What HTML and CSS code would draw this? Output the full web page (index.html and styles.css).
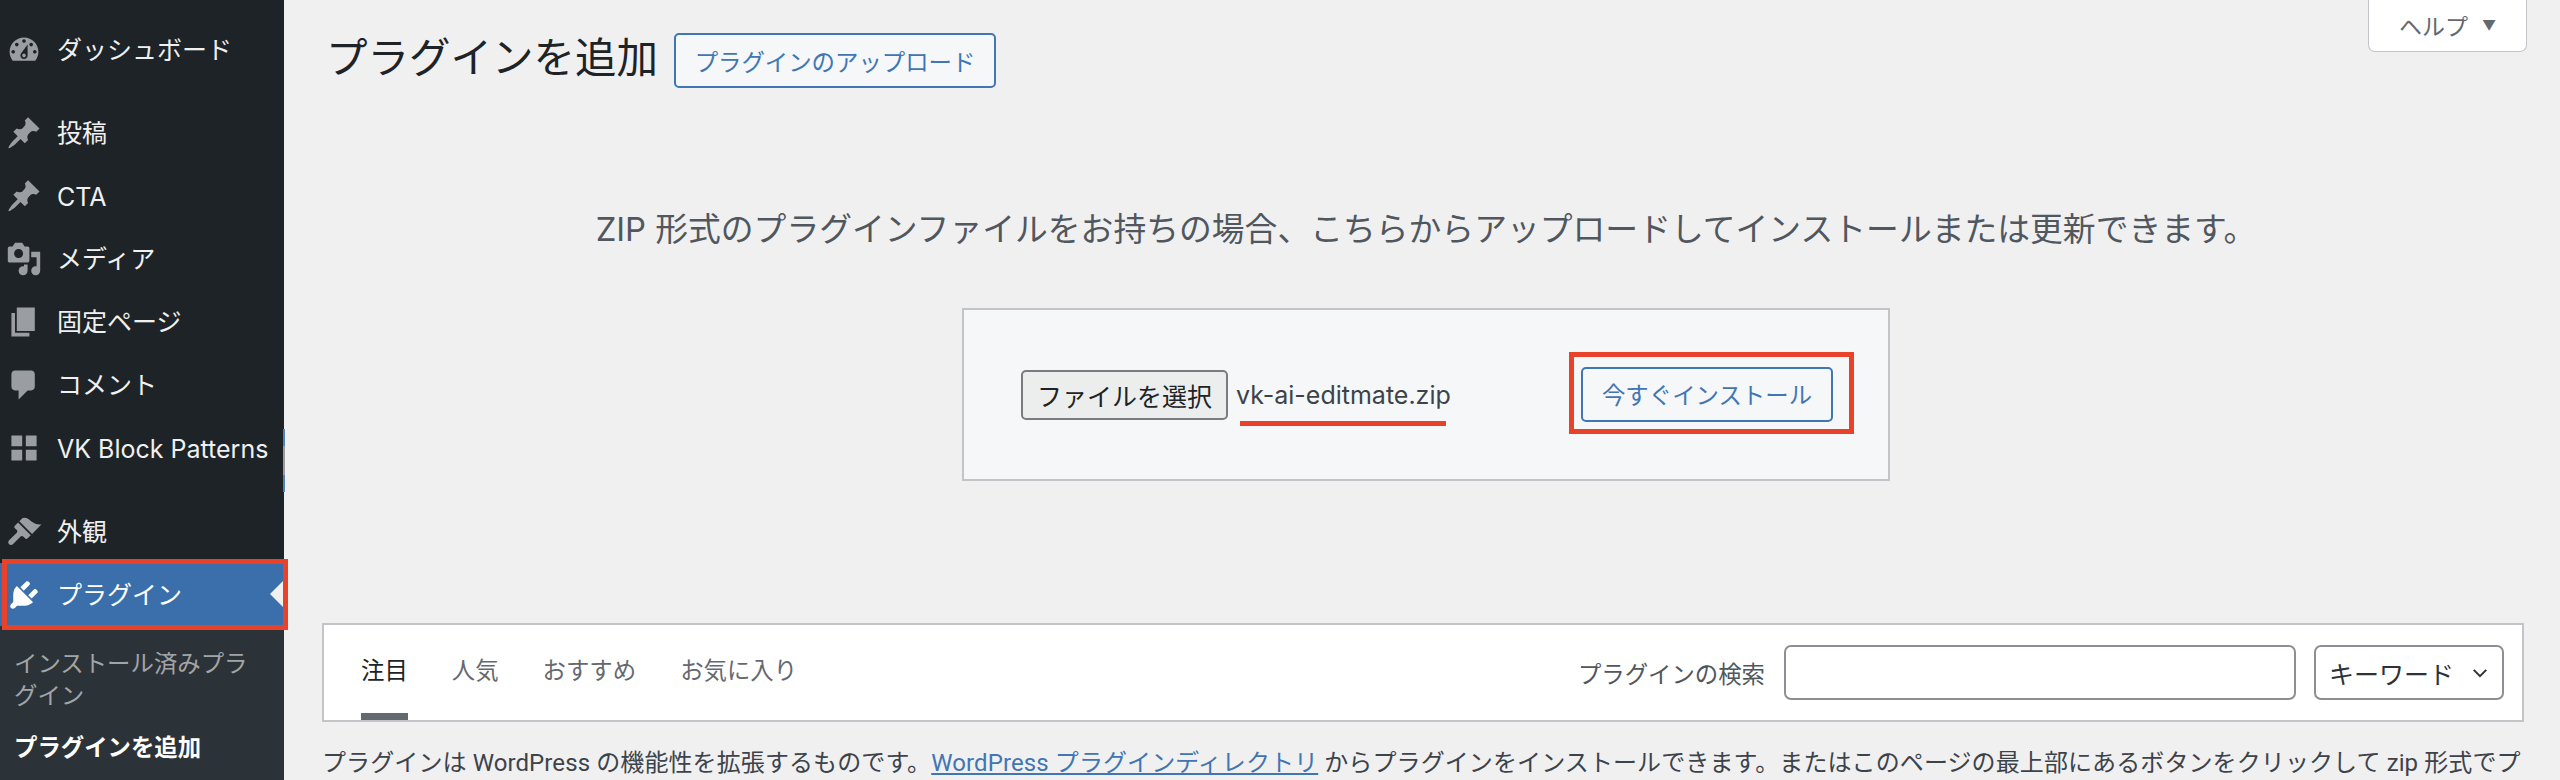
FILE: index.html
```html
<!DOCTYPE html>
<html lang="ja">
<head>
<meta charset="utf-8">
<title>プラグインを追加</title>
<link rel="stylesheet" href="styles.css">
</head>
<body>
<div class="layout">
  <nav class="sidebar">
    <ul class="menu">
      <li class="item"><svg class="ico" viewBox="0 0 20 20"><path fill-rule="evenodd" d="M3.76 16h12.48c1.1-1.37 1.76-3.11 1.76-5 0-4.42-3.58-8-8-8s-8 3.58-8 8c0 1.89.66 3.63 1.76 5zM10 4c.55 0 1 .45 1 1s-.45 1-1 1-1-.45-1-1 .45-1 1-1zM6 6c.55 0 1 .45 1 1s-.45 1-1 1-1-.45-1-1 .45-1 1-1zm8 0c.55 0 1 .45 1 1s-.45 1-1 1-1-.45-1-1 .45-1 1-1zm-5.37 5.55L12 7v6c0 1.1-.9 2-2 2s-2-.9-2-2c0-.57.24-1.08.63-1.45zM4 10c.55 0 1 .45 1 1s-.45 1-1 1-1-.45-1-1 .45-1 1-1zm12 0c.55 0 1 .45 1 1s-.45 1-1 1-1-.45-1-1 .45-1 1-1zm-5 3c0-.55-.45-1-1-1s-1 .45-1 1 .45 1 1 1 1-.45 1-1z"/></svg><span>ダッシュボード</span></li>
      <li class="item sep"><svg class="ico" viewBox="0 0 20 20"><path d="M10.44 3.02l1.82-1.82 6.36 6.35-1.83 1.82c-1.05-.68-2.48-.57-3.41.36l-.75.75c-.92.93-1.04 2.35-.35 3.41l-1.83 1.82-2.41-2.41-2.8 2.79c-.42.42-3.38 2.71-3.8 2.29s1.86-3.39 2.28-3.81l2.79-2.79L4.1 9.36l1.83-1.82c1.05.69 2.48.57 3.4-.36l.75-.75c.93-.92 1.05-2.35.36-3.41z"/></svg><span>投稿</span></li>
      <li class="item"><svg class="ico" viewBox="0 0 20 20"><path d="M10.44 3.02l1.82-1.82 6.36 6.35-1.83 1.82c-1.05-.68-2.48-.57-3.41.36l-.75.75c-.92.93-1.04 2.35-.35 3.41l-1.83 1.82-2.41-2.41-2.8 2.79c-.42.42-3.38 2.71-3.8 2.29s1.86-3.39 2.28-3.81l2.79-2.79L4.1 9.36l1.83-1.82c1.05.69 2.48.57 3.4-.36l.75-.75c.93-.92 1.05-2.35.36-3.41z"/></svg><span class="latin">CTA</span></li>
      <li class="item"><svg class="ico" viewBox="0 0 20 20"><path fill-rule="evenodd" d="M13 11V4c0-.55-.45-1-1-1h-1.67L9 1H5L3.67 3H2c-.55 0-1 .45-1 1v7c0 .55.45 1 1 1h10c.55 0 1-.45 1-1zM7 4.5c1.38 0 2.5 1.12 2.5 2.5S8.38 9.5 7 9.5 4.5 8.38 4.5 7 5.62 4.5 7 4.5zM14 6h5v10.5c0 1.38-1.12 2.5-2.5 2.5S14 17.88 14 16.5s1.12-2.5 2.5-2.5c.17 0 .34.02.5.05V9h-3V6zm-4 8.05V13h2v3.5c0 1.38-1.12 2.5-2.5 2.5S7 17.88 7 16.5 8.12 14 9.5 14c.17 0 .34.02.5.05z"/></svg><span>メディア</span></li>
      <li class="item"><svg class="ico" viewBox="0 0 20 20"><path d="M6 15V2h10v13H6zm-1 1h8v2H3V5h2v11z"/></svg><span>固定ページ</span></li>
      <li class="item"><svg class="ico" viewBox="0 0 20 20"><path d="M5 2h9c1.1 0 2 .9 2 2v7c0 1.1-.9 2-2 2h-2l-5 5v-5H5c-1.1 0-2-.9-2-2V4c0-1.1.9-2 2-2z"/></svg><span>コメント</span></li>
      <li class="item"><svg class="ico" viewBox="0 0 20 20"><path d="M9 9V3H3v6h6zm8 0V3h-6v6h6zm-8 8v-6H3v6h6zm8 0v-6h-6v6h6z"/></svg><span class="latin">VK Block Patterns</span></li>
      <li class="item sep2"><svg class="ico" viewBox="0 0 20 20"><path d="M14.48 11.06L7.41 3.99l1.5-1.5c.5-.56 2.3-.47 3.51.32 1.21.8 1.43 1.28 2.91 2.1 1.18.64 2.45 1.26 4.45.85zM13.77 11.77L6.7 4.7 4.93 6.47c-.39.39-.39 1.02 0 1.41l1.06 1.06c.39.39.39 1.03 0 1.42L1.7 14.65c-.59.59-.59 1.53 0 2.12.59.59 1.53.59 2.12 0l4.29-4.29c.39-.39 1.03-.39 1.42 0l1.06 1.06c.39.39 1.02.39 1.41 0z"/></svg><span>外観</span></li>
      <li class="item active"><svg class="ico" viewBox="0 0 20 20"><path d="M13.11 4.36L9.87 7.6 8 5.73l3.24-3.24c.35-.34 1.05-.2 1.56.32.52.51.66 1.21.31 1.55zm-8 1.77l.91-1.12 9.01 9.01-1.19.84c-.71.71-2.63 1.16-3.82 1.16H6.14L4.9 17.26c-.59.59-1.54.59-2.12 0-.59-.58-.59-1.53 0-2.12l1.24-1.24v-3.88c0-1.13.4-3.19 1.09-3.89zm7.26 3.97l3.24-3.24c.34-.35 1.04-.21 1.55.31.52.51.66 1.21.31 1.55l-3.24 3.25z"/></svg><span>プラグイン</span></li>
    </ul>
    <ul class="submenu">
      <li class="subitem">インストール済みプラグイン</li>
      <li class="subitem current">プラグインを追加</li>
    </ul>
  </nav>
  <main class="main">
    <div class="help">ヘルプ <span class="caret">▼</span></div>
    <header class="title-row">
      <h1 class="title">プラグインを追加</h1>
      <a class="btn">プラグインのアップロード</a>
    </header>
    <section class="upload">
      <p class="upload-help">ZIP 形式のプラグインファイルをお持ちの場合、こちらからアップロードしてインストールまたは更新できます。</p>
      <div class="upload-box">
        <button class="file-btn" type="button">ファイルを選択</button>
        <span class="file-name">vk-ai-editmate.zip</span>
        <span class="mark"><a class="btn install">今すぐインストール</a></span>
      </div>
    </section>
    <div class="filter">
      <ul class="tabs">
        <li class="tab on">注目</li>
        <li class="tab">人気</li>
        <li class="tab">おすすめ</li>
        <li class="tab">お気に入り</li>
      </ul>
      <form class="search">
        <label class="search-label" for="q">プラグインの検索</label>
        <input class="search-input" id="q" type="text">
        <div class="select">キーワード<svg class="chev" viewBox="0 0 16 16"><path d="M3 5.5l5 5 5-5" fill="none" stroke="#2c3338" stroke-width="1.6"/></svg></div>
      </form>
    </div>
    <p class="intro">プラグインは WordPress の機能性を拡張するものです。<a class="link">WordPress プラグインディレクトリ</a> からプラグインをインストールできます。またはこのページの最上部にあるボタンをクリックして zip 形式でプラグインをアップロードできます。</p>
  </main>
</div>
</body>
</html>
```
FILE: styles.css
```css
* { box-sizing: border-box; }
html, body { margin: 0; height: 780px; overflow: hidden; }
body {
  background: #f0f0f1;
  color: #50575e;
  font-family: "Inter", "Noto Sans CJK JP", sans-serif;
  font-size: 23.4px;
}
ul { list-style: none; margin: 0; padding: 0; }
.layout { display: flex; height: 780px; }

.sidebar {
  width: 284px;
  flex: none;
  background: #1d2327;
  padding-top: 18px;
  display: flex;
  flex-direction: column;
  position: relative;
  z-index: 2;
}
.sidebar::after {
  content: "";
  position: absolute;
  left: 283px;
  top: 429px;
  width: 2px;
  height: 63px;
  background: linear-gradient(#4f83bd 0 17px, #9a9c9f 17px 46px, #4f83bd 46px);
}
.item {
  height: 63px;
  display: flex;
  align-items: center;
  color: #f0f0f1;
  font-size: 25px;
  white-space: nowrap;
  position: relative;
}
.item span { position: relative; top: -2px; }
.item span.latin { top: 1px; }
.item.sep { margin-top: 20px; }
.item.sep2 { margin-top: 21px; }
.ico { width: 36px; height: 36px; margin: 0 15px 0 6px; flex: none; fill: #9a9ea3; }
.item.active { background: #3a6fab; color: #fff; }
.item.active .ico { fill: #fff; }
.item.active::before {
  content: "";
  position: absolute;
  right: 0;
  top: 17px;
  border: 14px solid transparent;
  border-left: 0;
  border-right-color: #f0f0f1;
}
.item.active::after {
  content: "";
  position: absolute;
  inset: -4px -4px -4px 2px;
  border: 5px solid #e8432a;
}
.submenu { flex: 1; background: #2c3338; padding: 22px 14px 0; }
.subitem { color: #a2a5a8; line-height: 32px; margin-bottom: 20px; }
.subitem.current { color: #fff; font-weight: 700; }

.main {
  flex: 1;
  min-width: 0;
  height: 780px;
  overflow: hidden;
  padding: 0 36px 0 38px;
  position: relative;
}
.help {
  position: absolute;
  top: -1px;
  right: 33px;
  width: 159px;
  height: 53px;
  background: #fff;
  border: 1px solid #c3c4c7;
  border-top: 0;
  border-radius: 0 0 7px 7px;
  color: #646970;
  font-size: 23px;
  display: flex;
  align-items: center;
  justify-content: center;
  gap: 14px;
}
.caret { font-size: 14px; }
.title-row { display: flex; align-items: center; gap: 16px; padding-top: 33px; height: 88px; }
.title { margin: 0 0 0 4px; font-size: 41.5px; font-weight: 400; color: #1d2327; line-height: 55px; position: relative; top: -2px; }
.btn {
  display: inline-flex;
  align-items: center;
  justify-content: center;
  border: 2px solid #3f76b3;
  border-radius: 5px;
  background: #f6f7f9;
  color: #3f76b3;
  font-size: 23.4px;
  height: 55px;
  width: 322px;
}
.upload { padding-left: 6px; }
.upload-help {
  margin: 0;
  padding-top: 120px;
  line-height: 42px;
  text-align: center;
  font-size: 32.8px;
  color: #50575e;
  white-space: nowrap;
}
.upload-box {
  width: 928px;
  height: 173px;
  margin: 58px auto 0;
  background: #f6f7f9;
  border: 2px solid #c3c4c7;
  padding: 0 34px 0 57px;
  display: flex;
  align-items: center;
}
.file-btn {
  width: 207px;
  height: 50px;
  padding: 0;
  background: #eceeee;
  border: 2px solid #7b7c7e;
  border-radius: 5px;
  font: inherit;
  font-size: 25px;
  color: #1d2327;
}
.file-name {
  margin-left: 8px;
  font-size: 25px;
  color: #3c434a;
  position: relative;
  white-space: nowrap;
}
.file-name::after {
  content: "";
  position: absolute;
  left: 4px;
  right: 5px;
  top: 41px;
  height: 5px;
  background: #e8432a;
}
.mark {
  margin-left: auto;
  border: 5px solid #e8432a;
  padding: 10px 16px 7px 7px;
  display: flex;
  position: relative;
  top: -2px;
}
.install { width: 252px; }

.filter {
  margin-top: 142px;
  height: 99px;
  background: #fff;
  border: 2px solid #c3c4c7;
  padding: 0 18px 0 37px;
  display: flex;
  align-items: stretch;
  justify-content: space-between;
}
.tabs { display: flex; gap: 44px; }
.tab {
  display: flex;
  align-items: center;
  padding-bottom: 7px;
  color: #646970;
  position: relative;
}
.tab.on { color: #1d2327; }
.tab.on::after {
  content: "";
  position: absolute;
  left: 0;
  right: 0;
  bottom: 0;
  height: 7px;
  background: #646970;
}
.search { display: flex; align-items: center; gap: 18px; }
.search-label { color: #50575e; margin-right: 1px; }
.search-input {
  width: 512px;
  height: 55px;
  background: #fff;
  border: 2px solid #8c8f94;
  border-radius: 7px;
}
.select {
  width: 190px;
  height: 55px;
  background: #fff;
  border: 2px solid #8c8f94;
  border-radius: 7px;
  font-size: 25px;
  color: #2c3338;
  display: flex;
  align-items: center;
  justify-content: space-between;
  padding: 0 12px 0 13px;
}
.chev { width: 20px; height: 20px; flex: none; }
.intro {
  margin: 19px 0 0;
  width: 2205px;
  line-height: 44px;
  color: #3c434a;
  font-family: "Roboto", "Noto Sans CJK JP", sans-serif;
  font-size: 24px;
  letter-spacing: 0.1px;
}
.link { color: #3f76b3; text-decoration: underline; }
```
